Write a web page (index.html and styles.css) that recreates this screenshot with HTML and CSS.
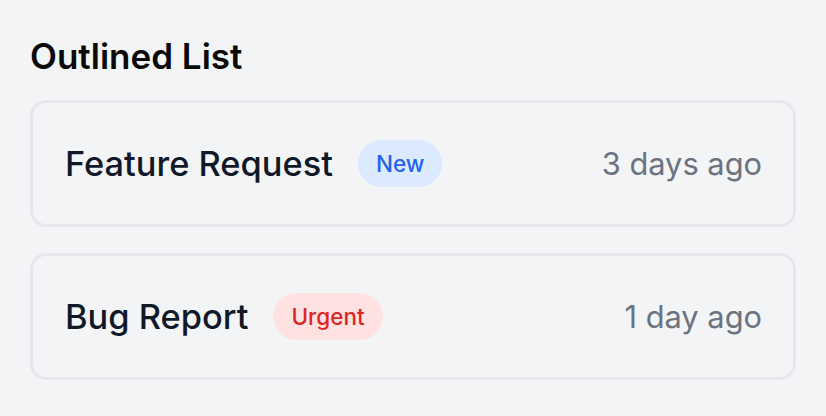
FILE: index.html
```html
<!doctype html>
<html lang="en">
<head>
  <meta charset="utf-8">
  <title>Outlined List</title>
  <link rel="stylesheet" href="styles.css">
</head>
<body>
  <div class="section">
    <h2 class="section-title">Outlined List</h2>

    <ul class="outlined-list">
      <li class="item">
        <div class="item-main">
          <span class="item-title">Feature Request</span>
          <span class="badge badge-new">New</span>
        </div>
        <span class="item-time">3 days ago</span>
      </li>
      <li class="item">
        <div class="item-main">
          <span class="item-title">Bug Report</span>
          <span class="badge badge-urgent">Urgent</span>
        </div>
        <span class="item-time">1 day ago</span>
      </li>
    </ul>
  </div>
</body>
</html>
```

FILE: styles.css
```css
body,
html {
  margin: 0;
  padding: 0;
  background: #f3f4f6;
  font-family: Inter, "Noto Sans", Arial, sans-serif;
}

.section {
  padding: 36px 30px 0 29px;
}

.section-title {
  margin: 0 0 24px 1px;
  font-size: 35px;
  line-height: 40px;
  font-weight: 600;
  color: #0a0a0a;
}

.outlined-list {
  list-style: none;
  margin: 0;
  padding: 0;
  display: flex;
  flex-direction: column;
  gap: 26px;
}

.item {
  display: flex;
  align-items: center;
  justify-content: space-between;
  margin-left: 1px;
  padding: 32px 31px 32px 32px;
  border: 3px solid #e5e7eb;
  border-radius: 16px;
  line-height: 57px;
}

.item-main {
  display: flex;
  align-items: center;
}

.item-title {
  font-size: 34.4px;
  font-weight: 500;
  color: #111827;
}

.badge {
  margin-left: 25px;
  padding: 0 18px;
  border-radius: 999px;
  font-size: 22.5px;
  font-weight: 500;
  line-height: 47px;
}

.badge-new {
  background: #dbeafe;
  color: #2563eb;
}

.badge-urgent {
  background: #fee2e2;
  color: #dc2626;
}

.item-time {
  font-size: 30.8px;
  color: #6b7280;
}
```
